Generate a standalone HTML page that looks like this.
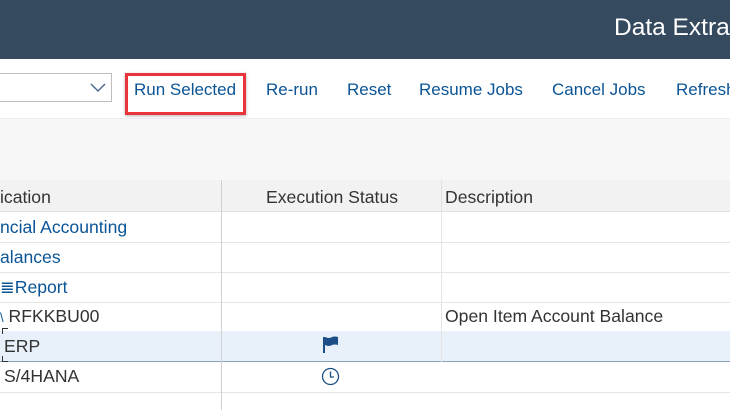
<!DOCTYPE html>
<html><head><style>
body{margin:0;width:730px;height:410px;overflow:hidden;background:#fff;font-family:"Liberation Sans",sans-serif;position:relative}
.a{position:absolute;white-space:nowrap}
.lnk{color:#0a5496;font-size:17px;top:80px}
.r{position:absolute;left:0;width:730px;height:30px;border-bottom:1px solid #e5e5e5}
.c{position:absolute;font-size:17.6px;white-space:nowrap}
</style></head><body>
<div class="a" style="left:0;top:0;width:730px;height:59px;background:#354a5f"></div>
<div class="a" style="left:614px;top:14px;color:#fff;font-size:24.5px">Data Extra</div>
<div class="a" style="left:0;top:73px;width:111px;height:27px;border:1px solid #bfbfbf;border-left:none;background:#fff"></div>
<svg class="a" style="left:90px;top:83px" width="16" height="10"><path d="M1 1 L8 8 L15 1" fill="none" stroke="#4a6d8f" stroke-width="1.5"/></svg>
<div class="a" style="left:125px;top:73px;width:121px;height:42px;border:3px solid #e8343a;box-sizing:border-box;box-shadow:0 1px 3px rgba(0,0,0,.3)"></div>
<div class="a lnk" style="left:134px">Run Selected</div>
<div class="a lnk" style="left:266px">Re-run</div>
<div class="a lnk" style="left:347px">Reset</div>
<div class="a lnk" style="left:419px">Resume Jobs</div>
<div class="a lnk" style="left:552px">Cancel Jobs</div>
<div class="a lnk" style="left:676px">Refresh</div>
<div class="a" style="left:0;top:118px;width:730px;height:62px;background:#f7f7f7;border-top:1px solid #ececec"></div>
<div class="a" style="left:0;top:180px;width:730px;height:31px;background:#f2f2f2;border-bottom:1px solid #e0e0e0"></div>
<div class="c" style="left:0;top:187px;color:#333">ication</div>
<div class="c" style="left:266px;top:187px;color:#333">Execution Status</div>
<div class="c" style="left:445px;top:187px;color:#333">Description</div>
<div class="r" style="top:212px"></div>
<div class="r" style="top:242px"></div>
<div class="r" style="top:272px"></div>
<div class="r" style="top:302px"></div>
<div class="r" style="top:331px;background:#e8f0f9;border-bottom:1px solid #8aa0b8"></div>
<div class="r" style="top:362px"></div>
<div class="a" style="left:221px;top:180px;width:1px;height:230px;background:#d0d0d0"></div>
<div class="a" style="left:441px;top:180px;width:1px;height:32px;background:#e0e0e0"></div>
<div class="a" style="left:441px;top:212px;width:1px;height:150px;background:#e5e5e5"></div>
<div class="c" style="left:0;top:217px;color:#0a5496">ncial Accounting</div>
<div class="c" style="left:0;top:247px;color:#0a5496">alances</div>
<div class="c" style="left:0;top:277px;color:#0a5496">≣Report</div>
<div class="c" style="left:0;top:306px;color:#333"><span style="color:#0a5496;font-size:13px">\</span> RFKKBU00</div>
<div class="c" style="left:445px;top:306px;color:#333">Open Item Account Balance</div>
<div class="c" style="left:4px;top:336px;color:#333">ERP</div>
<div class="a" style="left:2px;top:328px;width:5px;height:5px;border-left:1px solid #333;border-top:1px solid #333"></div>
<div class="a" style="left:2px;top:356px;width:5px;height:5px;border-left:1px solid #333;border-bottom:1px solid #333"></div>
<div class="c" style="left:4px;top:366px;color:#333">S/4HANA</div>
<svg class="a" style="left:323px;top:336px" width="16" height="18"><path d="M1 1 V17" stroke="#1d4f86" stroke-width="2"/><path d="M2 1 Q6 3 9 1 Q12 0 15 1 V9 Q12 8 9 9 Q6 11 2 9 Z" fill="#1d4f86"/></svg>
<svg class="a" style="left:321px;top:367px" width="19" height="19"><circle cx="9.5" cy="9.5" r="8" fill="none" stroke="#1d4f86" stroke-width="1.3"/><path d="M9.5 4.5 V10 H13" fill="none" stroke="#1d4f86" stroke-width="1.3"/></svg>
</body></html>
